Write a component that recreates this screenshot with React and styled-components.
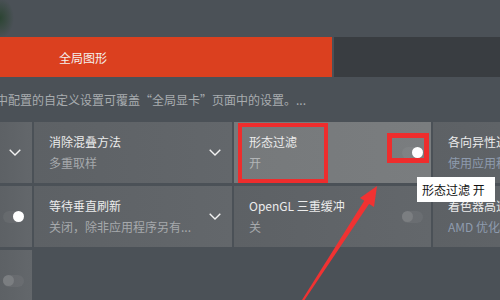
import React from "react";
import styled, { createGlobalStyle } from "styled-components";

const Global = createGlobalStyle`
    html, body {
        margin: 0;
        padding: 0;
        background: #4b5157;
    }
    body {
        font-family: "Noto Sans CJK SC", "Noto Sans", "Liberation Sans", sans-serif;
        -webkit-font-smoothing: antialiased;
    }
`;

const Page = styled.div`
    position: relative;
    width: 500px;
    height: 300px;
    overflow: hidden;
    background: #4b5157;
`;

const Header = styled.div`
    height: 37px;
    background: radial-gradient(ellipse 14px 20px at 0 18px, rgba(38, 66, 44, 0.85), rgba(38, 66, 44, 0) 100%), #4b5157;
`;

const TabBar = styled.div`
    display: flex;
    gap: 2px;
    height: 40px;
`;

const Tab = styled.div`
    box-sizing: border-box;
    display: flex;
    align-items: center;
    width: ${(p) => (p.$active ? "332px" : "auto")};
    flex: ${(p) => (p.$active ? "0 0 332px" : "1")};
    padding-left: 59px;
    background: ${(p) => (p.$active ? "#db401f" : "#393d41")};
    color: #f4f0ee;
    font-size: 12px;
`;

const Description = styled.div`
    height: 45px;
    display: flex;
    align-items: center;
    margin-left: -4px;
    white-space: nowrap;
    color: #a8acaf;
    font-size: 12px;
`;

const Grid = styled.div`
    display: grid;
    grid-template-columns: 32px 198px 197px 197px;
    grid-auto-rows: 61px;
    gap: 3px 2px;
`;

const Cell = styled.div`
    box-sizing: border-box;
    display: flex;
    align-items: center;
    justify-content: ${(p) => (p.$end ? "flex-end" : "space-between")};
    padding: 0 ${(p) => (p.$toggle ? "8px" : "11px")} 0 15px;
    background: ${(p) =>
        p.$hover
            ? "linear-gradient(90deg, #76797b, #7a7d7f)"
            : "linear-gradient(90deg, #5d6165, #63676b)"};
    overflow: hidden;
`;

const Texts = styled.div`
    display: flex;
    flex-direction: column;
    gap: 3px;
    min-width: 0;
    white-space: nowrap;
`;

const Title = styled.div`
    font-size: 12px;
    line-height: 18px;
    color: #ececec;
`;

const Sub = styled.div`
    font-size: 12px;
    line-height: 18px;
    color: ${(p) => (p.$blue ? "#8e9bae" : p.$hover ? "#b2b5b7" : "#a6a9ac")};
`;

const Track = styled.div`
    position: relative;
    flex: 0 0 auto;
    width: 21px;
    height: 12px;
    border-radius: 6px;
    background: rgba(255, 255, 255, 0.05);
`;

const Knob = styled.div`
    position: absolute;
    top: 0;
    left: ${(p) => (p.$on ? "10px" : "0")};
    width: 11px;
    height: 11px;
    border-radius: 50%;
    background: ${(p) => (p.$on ? "#ffffff" : "#7b7e81")};
`;

const Highlight = styled.div`
    position: absolute;
    box-sizing: border-box;
    border: ${(p) => p.$w}px solid #ee2d2d;
`;

const Tooltip = styled.div`
    position: absolute;
    left: 417px;
    top: 177px;
    width: 78px;
    height: 25px;
    box-sizing: border-box;
    padding-left: 5px;
    display: flex;
    align-items: center;
    background: #ffffff;
    color: #111;
    font-size: 12px;
    white-space: nowrap;
`;

const Overlay = styled.svg`
    position: absolute;
    left: 0;
    top: 0;
    pointer-events: none;
`;

function Chevron() {
    return (
        <svg width="12" height="7" viewBox="0 0 12 7" style={{ flex: "0 0 auto" }}>
            <path d="M0.7 0.7 L6 6 L11.3 0.7" fill="none" stroke="#f2f2f2" strokeWidth="1.4" />
        </svg>
    );
}

function Toggle({ on }) {
    return (
        <Track>
            <Knob $on={on} />
        </Track>
    );
}

function Setting({ title, sub, blue, hover, children }) {
    return (
        <Cell $hover={hover} $toggle={children && children.type === Toggle}>
            <Texts>
                <Title>{title}</Title>
                <Sub $blue={blue} $hover={hover}>{sub}</Sub>
            </Texts>
            {children}
        </Cell>
    );
}

export default function App() {
    return (
        <Page>
            <Global />
            <Header />
            <TabBar>
                <Tab $active>全局图形</Tab>
                <Tab />
            </TabBar>
            <Description>中配置的自定义设置可覆盖“全局显卡”页面中的设置。...</Description>
            <Grid>
                <Cell $end>
                    <Chevron />
                </Cell>
                <Setting title="消除混叠方法" sub="多重取样">
                    <Chevron />
                </Setting>
                <Setting title="形态过滤" sub="开" hover>
                    <Toggle on />
                </Setting>
                <Setting title="各向异性过滤" sub="使用应用程序设置" blue />

                <Cell $end $toggle>
                    <Toggle on />
                </Cell>
                <Setting title="等待垂直刷新" sub="关闭，除非应用程序另有...">
                    <Chevron />
                </Setting>
                <Setting title="OpenGL 三重缓冲" sub="关">
                    <Toggle />
                </Setting>
                <Setting title="着色器高速缓存" sub="AMD 优化" blue />

                <Cell $end $toggle>
                    <Toggle />
                </Cell>
            </Grid>

            <Highlight $w={4} style={{ left: 238, top: 123, width: 90, height: 60 }} />
            <Highlight $w={5} style={{ left: 387, top: 133, width: 42, height: 30 }} />
            <Tooltip>形态过滤 开</Tooltip>
            <Overlay width="500" height="300" viewBox="0 0 500 300">
                <polygon points="302,300 304.5,300 371,201 366,198" fill="#f03232" />
                <polygon points="377,186 360,198 374,207" fill="#f03232" />
            </Overlay>
        </Page>
    );
}
